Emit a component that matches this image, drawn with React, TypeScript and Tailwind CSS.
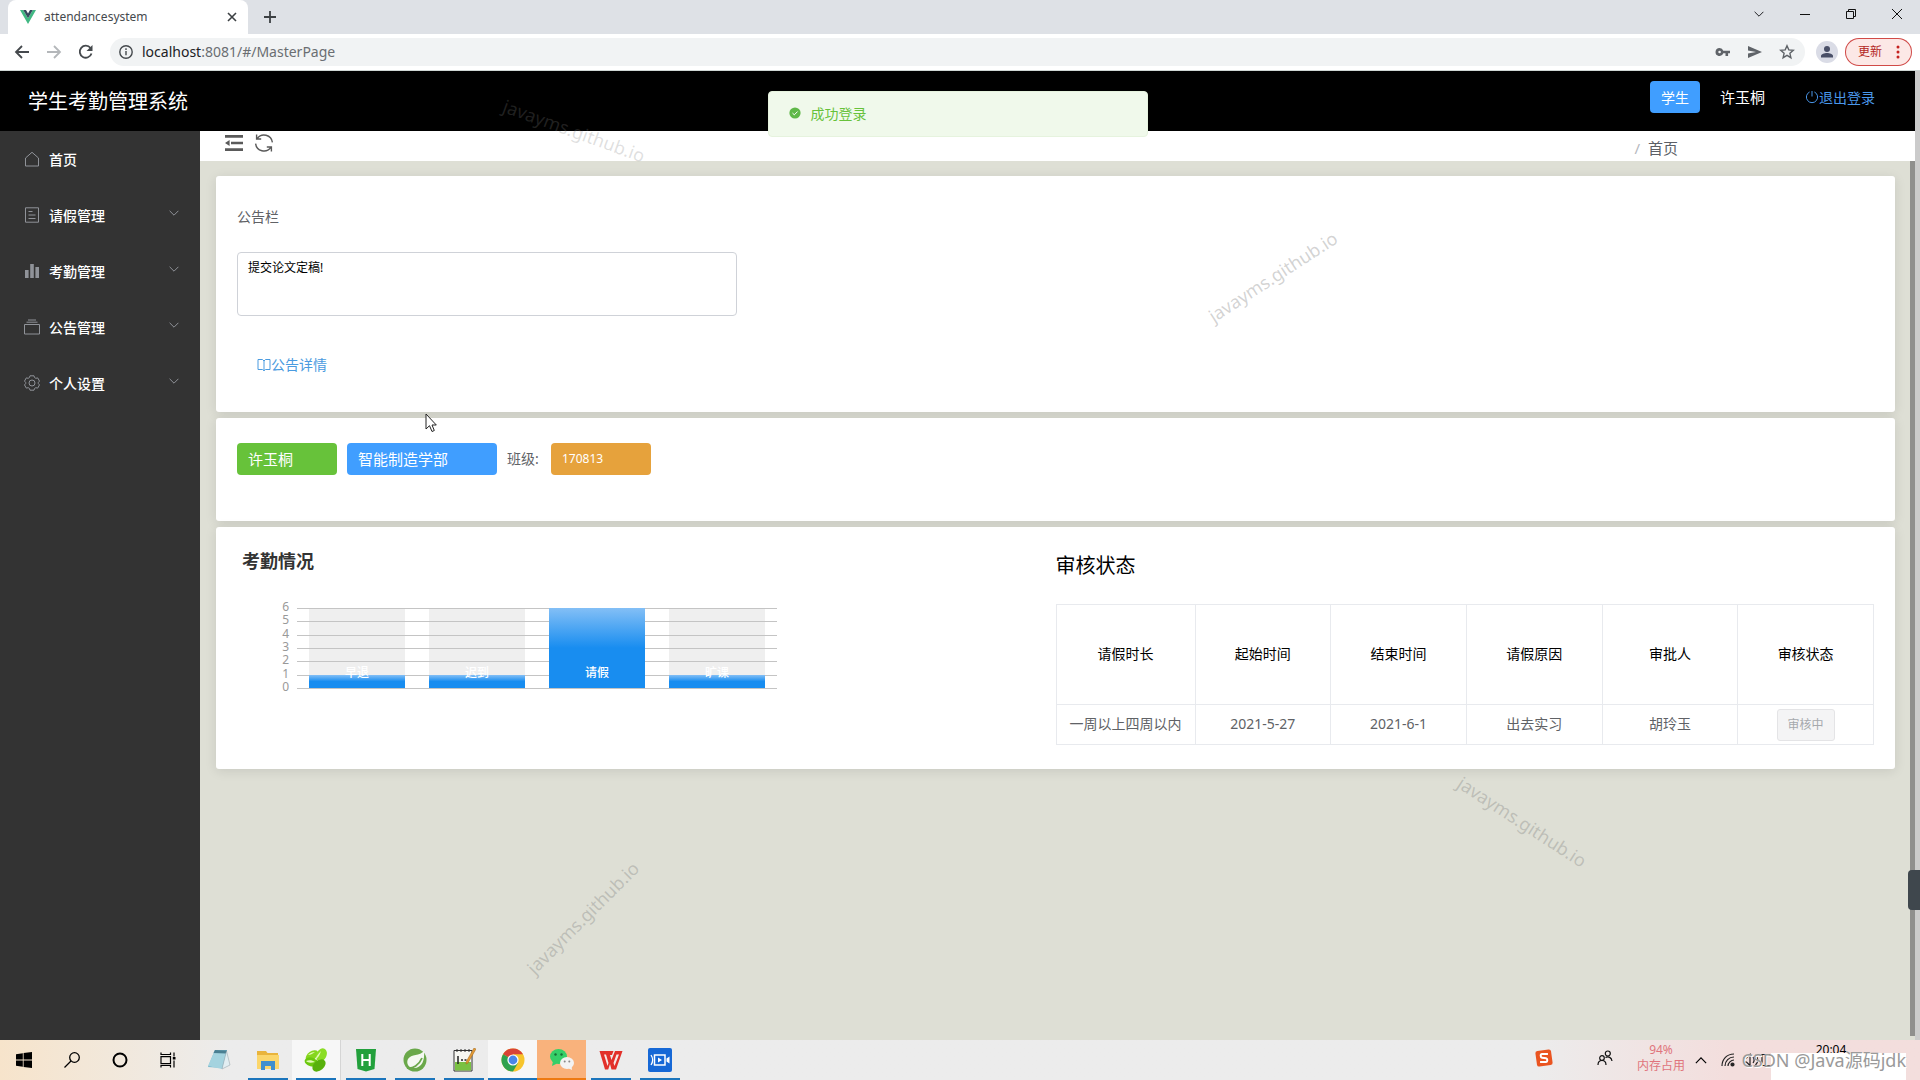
import React from "react";

type IconProps = { className?: string };

const cjk = "font-['Noto_Sans','Noto_Sans_CJK_SC',sans-serif]";

/* ---------- page icons ---------- */

const HouseIcon = () => (
  <svg className="size-4" viewBox="0 0 16 16" fill="none" stroke="#909399" strokeWidth="1">
    <path d="M1.5 7 8 1.3 14.5 7v8h-13z" strokeLinejoin="round" />
  </svg>
);
const DocumentIcon = () => (
  <svg className="size-4" viewBox="0 0 16 16" fill="none" stroke="#909399" strokeWidth="1">
    <path d="M1.5.8h13v14.4h-13zM4.5 4.5h4M4.5 8h7M4.5 11.5h7" />
  </svg>
);
const DataIcon = () => (
  <svg className="size-4" viewBox="0 0 16 16" fill="#909399">
    <path d="M1 7h3.6v8H1zM6.2 1h3.6v14H6.2zM11.4 4h3.6v11h-3.6z" />
  </svg>
);
const BoxIcon = () => (
  <svg className="size-4" viewBox="0 0 16 16" fill="none" stroke="#909399" strokeWidth="1">
    <path d="M.5 5.5h15v9.5H.5zM2.5 3.2h11M4 1h8" />
  </svg>
);
const GearIcon = () => (
  <svg className="size-4" viewBox="0 0 16 16" fill="none" stroke="#909399" strokeWidth="1">
    <path
      d="M6 .8h4l.6 1.8 1.2.7 1.9-.4 1.8 3.2-1.2 1.4v1l1.2 1.4-1.8 3.2-1.9-.4-1.2.7-.6 1.8H6l-.6-1.8-1.2-.7-1.9.4L.5 9.9l1.2-1.4v-1L.5 6.1l1.8-3.2 1.9.4 1.2-.7z"
      strokeLinejoin="round"
    />
    <circle cx="8" cy="8" r="3" />
  </svg>
);
const ChevronIcon = ({ className }: IconProps) => (
  <svg className={className} viewBox="0 0 10 6" fill="none" stroke="currentColor">
    <path d="M.6.8 5 5.2 9.4.8" />
  </svg>
);
const FoldIcon = () => (
  <svg className="size-5" viewBox="0 0 20 20" fill="#5a5a5a">
    <path d="M1 2h18v2.800H1zM7 8.700h12v2.600H7zM1 15.200h18V18H1zM1 10l4.600-3v6z" />
  </svg>
);
const RefreshIcon = () => (
  <svg className="size-5" viewBox="0 0 20 20" fill="none" stroke="#5a5a5a" strokeWidth="1.4">
    <path d="M3.2 5.6A8.4 8.4 0 0 1 18.4 9.4M2.600 1.500V6H7.200" />
    <path d="M16.8 14.4A8.4 8.4 0 0 1 1.600 10.600M17.400 18.500V14H12.800" />
  </svg>
);
const PowerIcon = () => (
  <svg className="size-3.5" viewBox="0 0 14 14" fill="none" stroke="currentColor">
    <path d="M4.6 2A5.6 5.6 0 1 0 9.4 2M7 1v5.5" />
  </svg>
);
const BookIcon = () => (
  <svg className="size-3.5" viewBox="0 0 14 14" fill="none" stroke="currentColor">
    <path d="M1 1.500h4.500L7 3l1.500-1.500H13v10H8.500L7 12.800l-1.500-1.300H1zM7 3v9.500" />
  </svg>
);
const SuccessIcon = () => (
  <svg className="size-3" viewBox="0 0 12 12">
    <circle cx="6" cy="6" r="5.6" fill="#5fb848" />
    <path d="M3.5 6.1 5.3 7.8 8.6 4.5" fill="none" stroke="#fff" />
  </svg>
);

/* ---------- browser window ---------- */

function TabStrip() {
  return (
    <div className="flex h-[34px] shrink-0 items-stretch bg-[#dee1e6] pl-2">
      <div className="flex w-[240px] items-center rounded-t-lg bg-white pl-3 pr-2">
        <svg className="h-3.5 w-4" viewBox="0 0 16 14">
          <path d="M0 0h3.2L8 8.3 12.8 0H16L8 14z" fill="#41b883" />
          <path d="M3.2 0H6l2 3.5L10 0h2.800L8 8.300z" fill="#35495e" />
        </svg>
        <span className="ml-2 flex-1 text-[12px] text-[#45494d]">attendancesystem</span>
        <button aria-label="关闭标签页" className="flex size-4 items-center justify-center">
          <svg className="size-2.5" viewBox="0 0 10 10" stroke="#3c4043" strokeWidth="1.6">
            <path d="M1 1l8 8M9 1 1 9" />
          </svg>
        </button>
      </div>
      <button aria-label="新建标签页" className="flex w-11 items-center justify-center">
        <svg className="size-3" viewBox="0 0 12 12" stroke="#3c4043" strokeWidth="1.8">
          <path d="M6 0v12M0 6h12" />
        </svg>
      </button>
      <div className="ml-auto flex">
        <button aria-label="搜索标签页" className="flex w-[46px] items-center justify-center pb-1.5">
          <ChevronIcon className="h-1.5 w-2.5 text-[#202124]" />
        </button>
        <button aria-label="最小化" className="flex w-[46px] items-center justify-center pb-1.5">
          <svg className="size-2.5" viewBox="0 0 10 10" stroke="#111">
            <path d="M0 5.5h10" />
          </svg>
        </button>
        <button aria-label="还原" className="flex w-[46px] items-center justify-center pb-1.5">
          <svg className="size-2.5" viewBox="0 0 10 10" fill="none" stroke="#111">
            <path d="M.5 2.5h7v7h-7zM2.5 2.5v-2h7v7h-2" />
          </svg>
        </button>
        <button aria-label="关闭" className="flex w-[46px] items-center justify-center pb-1.5">
          <svg className="size-2.5" viewBox="0 0 10 10" stroke="#111">
            <path d="M0 0l10 10M10 0 0 10" />
          </svg>
        </button>
      </div>
    </div>
  );
}

function AddressBar() {
  return (
    <div className="flex h-[37px] shrink-0 items-center border-b border-[#cfd6d4] bg-white pl-3.5 pr-2">
      <button aria-label="后退">
        <svg className="size-4" viewBox="0 0 16 16" fill="none" stroke="#45494d" strokeWidth="1.8">
          <path d="M15 8H2M8 2 2 8l6 6" />
        </svg>
      </button>
      <button aria-label="前进" className="ml-4">
        <svg className="size-4" viewBox="0 0 16 16" fill="none" stroke="#b4b7ba" strokeWidth="1.8">
          <path d="M1 8h13M8 2l6 6-6 6" />
        </svg>
      </button>
      <button aria-label="重新加载" className="ml-4">
        <svg className="size-4" viewBox="0 0 16 16" fill="none" stroke="#45494d" strokeWidth="1.8">
          <path d="M13.5 9.5A6 6 0 1 1 12.5 4" />
          <path d="M14.5 1v6h-6z" fill="#45494d" stroke="none" />
        </svg>
      </button>
      <div className="ml-4 flex h-7 flex-1 items-center rounded-full bg-[#f1f3f4] pl-2 pr-2.5">
        <svg className="size-4" viewBox="0 0 16 16" fill="none" stroke="#45494d" strokeWidth="1.4">
          <circle cx="8" cy="8" r="6.2" />
          <path d="M8 7v4.2M8 4.3V6" />
        </svg>
        <a href="#/MasterPage" className="ml-2 pb-0.5 text-[14px] text-[#6a6e72]">
          <span className="text-[#202124]">localhost</span>:8081/#/MasterPage
        </a>
        <div className="ml-auto flex items-center gap-4">
          <svg className="size-4" viewBox="0 0 16 16" fill="#5f6368">
            <path d="M4.6 4a4 4 0 1 0 3.7 5.3h2.2V12h2.6V9.3H15V6.700H8.300A4 4 0 0 0 4.600 4zm0 2.700a1.300 1.300 0 1 1 0 2.600 1.300 1.300 0 0 1 0-2.600z" />
          </svg>
          <svg className="size-4" viewBox="0 0 16 16" fill="#5f6368">
            <path d="M1 2l14 6-14 6V9.500L9 8 1 6.500z" />
          </svg>
          <svg className="size-4" viewBox="0 0 16 16" fill="none" stroke="#5f6368" strokeWidth="1.4">
            <path d="M8 1.8l1.8 4.1 4.5.4-3.4 3 1 4.400L8 11.400l-3.900 2.300 1-4.400-3.400-3 4.500-.4z" />
          </svg>
        </div>
      </div>
      <button aria-label="个人资料" className="ml-[11px] flex size-[22px] items-center justify-center rounded-full bg-[#dadce6]">
        <svg className="size-3.5" viewBox="0 0 14 14" fill="#4a5068">
          <circle cx="7" cy="4" r="3" />
          <path d="M1 12.500V11c0-2 3.500-3 6-3s6 1 6 3v1.500z" />
        </svg>
      </button>
      <button className="ml-[7px] flex h-7 w-[67px] items-center rounded-full border border-[#c5221f]/80 bg-[#fce8e6] pl-3 text-[12px] text-[#b3261e]">
        更新
        <svg className="ml-3.5 h-3.5 w-1" viewBox="0 0 4 14" fill="#c5221f">
          <circle cx="2" cy="2" r="1.5" />
          <circle cx="2" cy="7" r="1.5" />
          <circle cx="2" cy="12" r="1.5" />
        </svg>
      </button>
    </div>
  );
}

/* ---------- application ---------- */

function AppHeader() {
  return (
    <header className="flex h-[60px] shrink-0 items-center bg-black pb-2 pl-7 pr-10 text-white">
      <h1 className="pt-2.5 text-[20px] leading-7">学生考勤管理系统</h1>
      <span className="ml-auto flex h-8 items-center rounded bg-[#409eff] px-[11px] text-[14px]">学生</span>
      <span className="ml-5 text-[15px]">许玉桐</span>
      <button className="ml-10 flex items-center text-[14px] text-[#4a97ea]">
        <PowerIcon />
        退出登录
      </button>
    </header>
  );
}

const menu = [
  { label: "首页", icon: <HouseIcon />, sub: false },
  { label: "请假管理", icon: <DocumentIcon />, sub: true },
  { label: "考勤管理", icon: <DataIcon />, sub: true },
  { label: "公告管理", icon: <BoxIcon />, sub: true },
  { label: "个人设置", icon: <GearIcon />, sub: true },
];

function Sidebar() {
  return (
    <nav className="w-[200px] shrink-0 bg-[#333333]">
      {menu.map((m) => (
        <a key={m.label} href="#" className="flex h-14 items-center pl-6 pr-[21px] text-[14px] font-medium text-white">
          {m.icon}
          <span className="ml-[9px] flex-1">{m.label}</span>
          {m.sub && <ChevronIcon className="mb-1 h-1.5 w-2.5 text-[#909399]" />}
        </a>
      ))}
    </nav>
  );
}

function PageBar() {
  return (
    <div className="flex h-[30px] shrink-0 items-center bg-white pl-6">
      <button aria-label="收起菜单" className="pb-1.5">
        <FoldIcon />
      </button>
      <button aria-label="刷新" className="ml-2.5 pb-1.5">
        <RefreshIcon />
      </button>
      <div className="ml-auto mr-[237px] flex gap-2 pt-1 text-[15px] text-[#5c5f66]">
        <span className="text-[#b5b8be]">/</span>
        <span>首页</span>
      </div>
    </div>
  );
}

const card = "rounded-[3px] bg-white shadow-[0_2px_12px_0_rgba(0,0,0,0.1)]";

function NoticeCard() {
  return (
    <section className={`${card} flex h-[236px] flex-col items-start px-[21px] pt-[30px]`}>
      <label htmlFor="notice" className="text-[14px] leading-[22px] text-[#606266]">
        公告栏
      </label>
      <textarea
        id="notice"
        readOnly
        defaultValue="提交论文定稿!"
        className="mt-6 h-16 w-[500px] resize-none rounded border border-[#cfd2d8] px-2.5 py-[5px] text-[12px] leading-5 text-black"
      />
      <button className="ml-5 mt-[38px] flex items-center text-[14px] leading-[22px] text-[#4a9be0]">
        <BookIcon />
        公告详情
      </button>
    </section>
  );
}

function StudentCard() {
  return (
    <section className={`${card} flex h-[103px] items-start px-[21px] pt-[25px] text-white`}>
      <span className="flex h-8 w-[100px] items-center rounded bg-[#67c23a] pl-[11px] text-[15px]">许玉桐</span>
      <span className="ml-2.5 flex h-8 w-[150px] items-center rounded bg-[#409eff] pl-[11px] text-[15px]">智能制造学部</span>
      <span className="ml-2.5 w-11 text-[14px] leading-8 text-[#606266]">班级:</span>
      <span className="flex h-8 w-[100px] items-center rounded bg-[#e6a23c] pl-[11px] text-[12px]">170813</span>
    </section>
  );
}

const attendance = [
  { label: "早退", value: 1 },
  { label: "迟到", value: 1 },
  { label: "请假", value: 6 },
  { label: "旷课", value: 1 },
];
const ticks = [0, 1, 2, 3, 4, 5, 6];
const yOf = (v: number) => 90 - Math.round((v * 80) / 6);

function AttendanceChart() {
  return (
    <svg className="mt-[23px] h-[100px] w-[520px]" viewBox="0 0 520 100" role="img" aria-label="考勤情况">
      <defs>
        <linearGradient id="bar" x1="0" y1="0" x2="0" y2="1">
          <stop offset="0" stopColor="#83bff6" />
          <stop offset="0.5" stopColor="#188df0" />
          <stop offset="1" stopColor="#188df0" />
        </linearGradient>
      </defs>
      {attendance.map((a, i) => (
        <rect key={a.label} x={52 + i * 120} y="10" width="96" height="80" fill="#efefef" />
      ))}
      {ticks.map((t) => (
        <g key={t}>
          <path d={`M40 ${yOf(t) + 0.5}h480`} stroke="#c4c4c4" />
          <text x="32" y={yOf(t) + 3} textAnchor="end" fontSize="12" fill="#999">
            {t}
          </text>
        </g>
      ))}
      {attendance.map((a, i) => (
        <g key={a.label}>
          <rect x={52 + i * 120} y={yOf(a.value)} width="96" height={90 - yOf(a.value)} fill="url(#bar)" />
          <text x={100 + i * 120} y="79" textAnchor="middle" fontSize="12" fontWeight="500" fill="#fff">
            {a.label}
          </text>
        </g>
      ))}
    </svg>
  );
}

const columns = ["请假时长", "起始时间", "结束时间", "请假原因", "审批人", "审核状态"];
const row = ["一周以上四周以内", "2021-5-27", "2021-6-1", "出去实习", "胡玲玉"];
const cell = "border border-[#e8eaee] text-center";

function AttendanceCard() {
  return (
    <section className={`${card} flex items-start pb-6 pl-[21px] pr-[21px]`}>
      <div className="flex-1 pt-5">
        <h2 className="pl-[5px] text-[18px] font-bold leading-[28px] text-[#333]">考勤情况</h2>
        <div className="pl-5">
          <AttendanceChart />
        </div>
      </div>
      <div className="w-1/2 pt-[25px]">
        <h2 className="text-[20px] leading-7 text-black">审核状态</h2>
        <table className="mt-6 w-full table-fixed border-collapse text-[14px]">
          <thead>
            <tr className="h-[100px] text-black">
              {columns.map((c) => (
                <th key={c} className={`${cell} pb-0.5 font-normal first:w-[139px]`}>
                  {c}
                </th>
              ))}
            </tr>
          </thead>
          <tbody>
            <tr className="h-10 text-[#606266]">
              {row.map((r) => (
                <td key={r} className={`${cell} pb-0.5`}>
                  {r}
                </td>
              ))}
              <td className={cell}>
                <button
                  disabled
                  className="h-8 rounded-[3px] border border-[#e4e4e6] bg-[#f4f4f5] px-2.5 align-middle text-[12px] text-[#a6a9ad]"
                >
                  审核中
                </button>
              </td>
            </tr>
          </tbody>
        </table>
      </div>
    </section>
  );
}

function Toast() {
  return (
    <div
      role="alert"
      className="absolute left-1/2 top-5 flex h-[46px] w-[380px] -translate-x-1/2 items-center gap-2.5 rounded border border-[#e6f3de] bg-[#f0f9eb] pb-0.5 pl-5 text-[14px] text-[#67c23a]"
    >
      <SuccessIcon />
      成功登录
    </div>
  );
}

const stamp =
  "pointer-events-none absolute -translate-x-1/2 -translate-y-1/2 whitespace-nowrap text-[18px] select-none";

function Watermarks() {
  return (
    <>
      <span className={`${stamp} left-[574px] top-[60px] rotate-[20deg] text-[#808080]/25`}>javayms.github.io</span>
      <span className={`${stamp} left-[1273px] top-[206px] rotate-[-33deg] text-[#808080]/35`}>javayms.github.io</span>
      <span className={`${stamp} left-[1522px] top-[751px] rotate-[33deg] text-[#808080]/35`}>javayms.github.io</span>
      <span className={`${stamp} left-[583px] top-[847px] rotate-[-45deg] text-[#808080]/35`}>javayms.github.io</span>
    </>
  );
}

/* ---------- task bar ---------- */

const apps: { name: string; slot: string; line: string; icon: React.ReactNode }[] = [
  {
    name: "记事本",
    slot: "",
    line: "",
    icon: (
      <>
        <path d="M8 2h12l-3 18-16-1z" fill="#6fb3c9" />
        <path d="M8 2l11.500 1-4.500 18L1 18z" fill="#a4d3df" />
        <path d="M8 2l12 .5-1 3-12.500-.5z" fill="#4a7f92" />
        <path d="M19.500 3 23 17l-8 4z" fill="#e2eef2" stroke="#8c9ca5" strokeWidth=".5" />
      </>
    ),
  },
  {
    name: "文件资源管理器",
    slot: "",
    line: "bg-[#1b75bc]",
    icon: (
      <>
        <path d="M1 3h9l1.500 2H22v16H1z" fill="#e9b43c" />
        <path d="M1 7h22v14H1z" fill="#fbd66b" />
        <path d="M5 13h14v9h-4v-4H9v4H5z" fill="#3f8fce" />
      </>
    ),
  },
  {
    name: "安全浏览器",
    slot: "bg-white/60 border-r border-[#d5d5d5]",
    line: "bg-[#1b75bc]",
    icon: (
      <>
        <ellipse cx="8" cy="7.500" rx="7" ry="4.200" transform="rotate(-35 8 7.500)" fill="#86d61e" />
        <ellipse cx="17.500" cy="7" rx="5" ry="7" transform="rotate(25 17.500 7)" fill="#8bdd25" />
        <ellipse cx="7.500" cy="14" rx="7" ry="4.500" transform="rotate(15 7.500 14)" fill="#6cc80f" />
        <ellipse cx="15" cy="17.500" rx="7.500" ry="5" transform="rotate(-40 15 17.500)" fill="#58b00c" />
        <path d="M11 12c1-3 3-6 6-9-1 4-3 7-6 9zM2 13c3-1 6-1 9 1-4 1-7 1-9-1zM4 7c2-2 4-3 7-3-2 1-4 3-7 3z" fill="#e2fbb5" />
      </>
    ),
  },
  {
    name: "HBuilder",
    slot: "",
    line: "bg-[#1b75bc]",
    icon: (
      <>
        <path d="M2 1h20l-1.500 20L12 23.500 3.500 21z" fill="#22a03c" />
        <path d="M8.300 6v12M15.700 6v12M8.300 12h7.400" stroke="#fff" strokeWidth="2" />
      </>
    ),
  },
  {
    name: "Spring",
    slot: "",
    line: "bg-[#1b75bc]",
    icon: (
      <>
        <circle cx="12" cy="12" r="11.500" fill="#6aa84a" />
        <path d="M21 3c1 9-2 17-10 17-6 0-8-5-6-9C8 6 17 8 21 3z" fill="#f4f8f1" />
        <path d="M4 20c6 1 12-3 15-10" stroke="#6aa84a" strokeWidth="1.800" fill="none" />
      </>
    ),
  },
  {
    name: "文本编辑器",
    slot: "",
    line: "bg-[#1b75bc]",
    icon: (
      <>
        <path d="M2 2.500h18V23H2z" fill="#f7f7f2" stroke="#333" />
        <path d="M3 14h16v8.500H3z" fill="#7ac142" />
        <path d="M5 1v3M9 1v3M13 1v3M17 1v3" stroke="#333" />
        <path d="M6 8v8M9 12h2M12.500 12h2" stroke="#222" strokeWidth="1.500" />
        <path d="M22 0l2 1-8 14-2 1 .3-2.500z" fill="#e49a35" stroke="#9c6418" strokeWidth=".5" />
      </>
    ),
  },
  {
    name: "Chrome",
    slot: "bg-white/60",
    line: "bg-[#1b75bc] w-full",
    icon: (
      <>
        <circle cx="12" cy="12" r="11.500" fill="#f7c52d" />
        <path d="M12 12 2.040 6.250A11.500 11.500 0 0 1 21.960 6.250H12z" fill="#d94436" />
        <path d="M12 12 2.040 6.250A11.500 11.500 0 0 0 12 23.500l5-8.600z" fill="#2fa24f" />
        <circle cx="12" cy="12" r="5.600" fill="#fff" />
        <circle cx="12" cy="12" r="4.400" fill="#4a86e8" />
      </>
    ),
  },
  {
    name: "微信",
    slot: "bg-[#f9b27c]",
    line: "bg-[#ee7a12] w-full",
    icon: (
      <>
        <ellipse cx="8.500" cy="8.500" rx="8.500" ry="7.500" fill="#35cf68" />
        <path d="M3 13l-1 5 5-2.500z" fill="#35cf68" />
        <circle cx="5.500" cy="6.500" r="1.200" fill="#186e35" />
        <circle cx="11.500" cy="6.500" r="1.200" fill="#186e35" />
        <ellipse cx="17" cy="15" rx="7" ry="6" fill="#f3f3f3" />
        <path d="M18 20l4 2-.5-4z" fill="#f3f3f3" />
        <circle cx="14.700" cy="13.500" r="1" fill="#888" />
        <circle cx="19.300" cy="13.500" r="1" fill="#888" />
      </>
    ),
  },
  {
    name: "WPS",
    slot: "",
    line: "bg-[#1b75bc]",
    icon: (
      <>
        <path d="M.5 3h14l-1.500 4h-2l1.500 5L16 3h7.500L17 21.500h-4.500L11 16l-1.800 5.500H6z" fill="#e2302a" />
        <path d="M5 6.500h2l2.500 8.500-1 3zM17.500 6.500H20L15.500 18l-1-3z" fill="#f7e9e8" />
      </>
    ),
  },
  {
    name: "录屏",
    slot: "",
    line: "bg-[#1b75bc]",
    icon: (
      <>
        <rect x="0" y="0" width="24" height="24" rx="2" fill="#1668d6" />
        <path d="M6.500 7h10.500v10H6.500z" fill="none" stroke="#fff" strokeWidth="1.500" />
        <path d="M10 9.500v5l4-2.500zM18.500 10.500l3-2v7l-3-2z" fill="#fff" />
        <path d="M3 7c2 3 2 7 0 10" stroke="#fff" strokeWidth="1.300" fill="none" />
      </>
    ),
  },
];

function TaskBar() {
  return (
    <footer className="relative flex h-10 shrink-0 bg-linear-to-r from-[#f7e4cb] via-[#ececec] via-12% to-[#ececec]">
      <button aria-label="开始" className="flex w-12 items-center justify-center">
        <svg className="size-4" viewBox="0 0 16 16">
          <path d="M0 2.200 6.800 1.200V7.600H0zM7.600 1.100 16 0v7.600H7.600zM0 8.400h6.800v6.400L0 13.800zM7.600 8.400H16V16l-8.400-1.100z" />
        </svg>
      </button>
      <button aria-label="搜索" className="flex w-12 items-center justify-center">
        <svg className="size-4" viewBox="0 0 16 16" fill="none" stroke="#000" strokeWidth="1.3">
          <circle cx="10.500" cy="5.500" r="4.800" />
          <path d="M7 9 .5 15.500" />
        </svg>
      </button>
      <button aria-label="Cortana" className="flex w-12 items-center justify-center">
        <svg className="size-4" viewBox="0 0 16 16" fill="none" stroke="#000" strokeWidth="2">
          <circle cx="8" cy="8" r="6.500" />
        </svg>
      </button>
      <button aria-label="任务视图" className="flex w-12 items-center justify-center">
        <svg className="size-4" viewBox="0 0 16 16" fill="none" stroke="#000" strokeWidth="1.2">
          <path d="M1 4.600h9.500v7H1zM1 .5v2h9.500v-2M1 15.500v-2h9.500v2M14 .5v4M14 8.500v7" />
          <path d="M12.800 5h2.700v2.500h-2.700z" fill="#000" stroke="none" />
        </svg>
      </button>
      <div className="ml-0.5 flex">
        {apps.map((a) => (
          <button
            key={a.name}
            aria-label={a.name}
            className={`${a.slot} flex w-[49px] flex-col items-center justify-between pt-2`}
          >
            <svg className="size-6" viewBox="0 0 24 24">
              {a.icon}
            </svg>
            <span className={`${a.line} h-0.5 min-w-10`} />
          </button>
        ))}
      </div>
      <div className="ml-auto flex bg-linear-to-r from-[#ececec] to-[#f3dedd] to-50% pr-3.5">
        <div className="flex items-center pb-1">
          <svg className="size-[18px]" viewBox="0 0 16 16">
            <rect x="1" y="1" width="14" height="14" rx="2" fill="#ea5420" transform="rotate(-8 8 8)" />
            <path d="M11.500 4.500H6.200c-1.500 0-1.500 3 0 3.200l3.600.6c1.500.3 1.500 3 0 3.200H4.500" fill="none" stroke="#fff" strokeWidth="1.8" />
          </svg>
          <svg className="ml-11 size-4" viewBox="0 0 16 16" fill="none" stroke="#111" strokeWidth="1.2">
            <circle cx="10.800" cy="3.500" r="2.500" />
            <circle cx="5" cy="8" r="2.300" />
            <path d="M1 15c0-3 1.500-4.500 4-4.500S9 12 9 15M8.500 7.500c3-1.500 6 0 6.500 3.500" />
          </svg>
          <div className="ml-6 w-12 text-center text-[12px] leading-4 text-[#e0747c]">
            94%
            <br />
            内存占用
          </div>
        </div>
        <div className="flex items-center pl-2.5">
          <ChevronIcon className="h-[7px] w-3 rotate-180 text-black" />
          <svg className="ml-3.5 size-3.5" viewBox="0 0 14 14" fill="none" stroke="#222" strokeWidth="1.2">
            <path d="M1 13C1 6 6 1 13 1M4 13c0-5 4-9 9-9M7 13c0-3 3-6 6-6" />
            <circle cx="11.500" cy="11.500" r="1.500" fill="#222" />
          </svg>
          <svg className="ml-2 h-3.5 w-7" viewBox="0 0 28 14" fill="none" stroke="#222" strokeWidth="1.2">
            <path d="M1 5h2.500L7 1.500v11L3.500 9H1zM10 4c1.500 2 1.500 4 0 6M12.500 2c3 3 3 7 0 10M27 1.500h-8v11h8" />
          </svg>
          <div className="mt-[13px] h-[27px] w-[135px] bg-white">
            <time className="-mt-[11px] block h-[11px] w-[120px] overflow-hidden text-center text-[12px] leading-4 text-black">
              20:04
            </time>
          </div>
        </div>
      </div>
      <span className="absolute right-3.5 top-2 whitespace-nowrap text-[18px] leading-6 text-[#9a9a9a] [text-shadow:1px_1px_0_#fff]">
        CSDN @Java源码jdk
      </span>
    </footer>
  );
}

export default function App() {
  return (
    <div className={`${cjk} flex h-screen min-h-[900px] flex-col overflow-hidden bg-white`}>
      <TabStrip />
      <AddressBar />
      <div className="relative flex min-h-0 flex-1">
        <div className="relative flex min-w-0 flex-1 flex-col">
          <AppHeader />
          <div className="flex min-h-0 flex-1">
            <Sidebar />
            <main className="flex min-w-0 flex-1 flex-col">
              <PageBar />
              <div className="flex min-h-0 flex-1 bg-[#dedfd5]">
                <div className="flex min-w-0 flex-1 flex-col gap-1.5 pl-4 pr-[15px] pt-[15px]">
                  <NoticeCard />
                  <StudentCard />
                  <AttendanceCard />
                </div>
                <div className="mb-1 w-[5px] bg-[#8f8f8d]" />
              </div>
            </main>
          </div>
          <Watermarks />
          <Toast />
        </div>
        <div className="w-[5px] bg-[#cbcbcb]" />
        <div className="absolute right-0 top-[799px] h-10 w-3 rounded-l bg-[#3f474d]" />
        <svg className="absolute left-[425px] top-[342px] h-5 w-3" viewBox="0 0 12 20" fill="#fff" stroke="#222">
          <path d="M1 1v15l3.500-3.300L7 18.500l2.300-1L7 12h4.300z" />
        </svg>
      </div>
      <TaskBar />
    </div>
  );
}
